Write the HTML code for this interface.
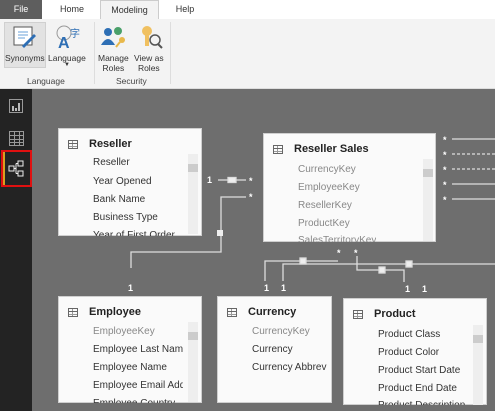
<!DOCTYPE html>
<html><head><meta charset="utf-8"><style>
*{margin:0;padding:0;box-sizing:border-box}
body{width:495px;height:411px;overflow:hidden;font-family:"Liberation Sans",sans-serif;background:#6e6e6e;position:relative}
.abs{position:absolute}
.tabs{left:0;top:0;width:495px;height:19px;background:#fff}
.tab{position:absolute;top:0;height:19px;font-size:9px;line-height:19px;text-align:center;color:#333}
.ribbon{left:0;top:19px;width:495px;height:70px;background:#f3f3f3;border-bottom:1px solid #ddd}
.side{left:0;top:89px;width:32px;height:322px;background:#232323}
.card{position:absolute;background:#fafafa;border:1px solid #cfcfcf}
.card h3{position:absolute;left:30px;top:9px;font-size:11px;font-weight:bold;color:#222}
.ti{position:absolute;left:9px;top:11px;width:10px;height:9px;border:1px solid #666;background:linear-gradient(#666 0 0) 0 2px/100% 1px no-repeat,linear-gradient(#999 0 0) 0 5px/100% 1px no-repeat,linear-gradient(#999 0 0) 3px 0/1px 100% no-repeat}
.f{position:absolute;font-size:10px;color:#333;white-space:nowrap;overflow:hidden}
.g{color:#888}
.sb{position:absolute;width:10px;background:#eee}
.sb i{position:absolute;left:0;top:10px;width:10px;height:8px;background:#ccc}
</style></head><body>
<div class="abs tabs">
 <div class="tab" style="left:0;width:42px;background:#5e5e5e;color:#fff">File</div>
 <div class="tab" style="left:44px;width:56px">Home</div>
 <div class="tab" style="left:100px;width:59px;background:#f3f3f3;border:1px solid #ccc;border-bottom:none;height:20px">Modeling</div>
 <div class="tab" style="left:160px;width:50px">Help</div>
</div>
<div class="abs ribbon">
 <div class="abs" style="left:4px;top:3px;width:42px;height:46px;background:#e2e2e2;border:1px solid #d0d0d0"></div>
 <svg class="abs" style="left:12px;top:6px" width="26" height="24"><rect x="2" y="2" width="18" height="18" fill="#fff" stroke="#555"/><path d="M6 7h10M6 10h10M6 13h7" stroke="#6aa0d8"/><path d="M10 21l12-12 2 2-12 12z" fill="#2e6fb5"/></svg>
 <svg class="abs" style="left:54px;top:5px" width="30" height="26"><circle cx="10" cy="9" r="7" fill="none" stroke="#999"/><text x="4" y="24" font-size="16" font-weight="bold" fill="#2e6fb5" font-family="Liberation Sans">A</text><text x="16" y="13" font-size="10" fill="#2e6fb5" font-family="Noto Sans CJK SC">字</text></svg>
 <div class="abs" style="left:5px;top:34px;font-size:8.5px;color:#333">Synonyms</div>
 <div class="abs" style="left:48px;top:34px;font-size:8.5px;color:#333">Language</div>
 <div class="abs" style="left:64px;top:43px;font-size:6px;color:#333">▼</div>
 <div class="abs" style="left:27px;top:57px;font-size:8.5px;color:#444">Language</div>
 <div class="abs" style="left:94px;top:3px;width:1px;height:62px;background:#ddd"></div>
 <svg class="abs" style="left:100px;top:6px" width="28" height="24"><circle cx="8" cy="7" r="4" fill="#2e6fb5"/><circle cx="18" cy="6" r="4" fill="#4aa06a"/><path d="M1 20q7-12 14 0z" fill="#2e6fb5"/><circle cx="22" cy="15" r="3" fill="#e8b84a"/><path d="M20 17l-4 5" stroke="#e8b84a" stroke-width="2"/></svg>
 <svg class="abs" style="left:140px;top:6px" width="24" height="24"><circle cx="7" cy="6" r="5" fill="#f0c060"/><rect x="5" y="9" width="4" height="12" fill="#f0c060"/><circle cx="15" cy="15" r="5" fill="none" stroke="#555" stroke-width="1.5"/><path d="M18 19l4 4" stroke="#555" stroke-width="2"/></svg>
 <div class="abs" style="left:98px;top:34px;font-size:8.5px;color:#333;text-align:center;line-height:10px">Manage<br>Roles</div>
 <div class="abs" style="left:134px;top:34px;font-size:8.5px;color:#333;text-align:center;line-height:10px">View as<br>Roles</div>
 <div class="abs" style="left:116px;top:57px;font-size:8.5px;color:#444">Security</div>
 <div class="abs" style="left:170px;top:3px;width:1px;height:62px;background:#ddd"></div>
</div>
<div class="abs side">
 <svg class="abs" style="left:9px;top:10px" width="14" height="14"><rect x=".5" y=".5" width="13" height="13" fill="none" stroke="#999"/><path d="M4 12V7M7 12V9M10 12V4" stroke="#bbb" stroke-width="2"/></svg>
 <svg class="abs" style="left:9px;top:42px" width="15" height="15"><rect x=".5" y=".5" width="14" height="14" fill="none" stroke="#999"/><path d="M0 4.5h15M0 8.5h15M0 11.5h15M5.5 0v15M10.5 0v15" stroke="#999"/></svg>
 <div class="abs" style="left:1px;top:61px;width:31px;height:37px;border:2px solid #e01010"></div>
 <div class="abs" style="left:3px;top:63px;width:2px;height:33px;background:#d8a020"></div>
 <svg class="abs" style="left:8px;top:71px" width="17" height="17"><rect x="1" y="6" width="5" height="5" fill="none" stroke="#eee"/><rect x="10" y="1" width="5" height="5" fill="none" stroke="#eee"/><rect x="10" y="11" width="5" height="5" fill="none" stroke="#eee"/><path d="M6 8.5h2M8 3.5v10M8 3.5h2M8 13.5h2" stroke="#eee"/></svg>
</div>
<svg class="abs" style="left:0;top:0" width="495" height="411">
 <g stroke="#ddd" stroke-width="1.3" fill="none">
 <path d="M218 180h28"/><rect x="228" y="177.5" width="8" height="5" fill="#eee"/>
 <path d="M246 197h-25v55h-90v16"/><rect x="217" y="230" width="6" height="6" fill="#eee" stroke="none"/>
 <path d="M452 139h43M452 184h43M452 199h43"/>
 <path d="M452 154h43M452 169h43" stroke-dasharray="3 2"/>
 <path d="M338 261h-73v20M495 264h-212v17M357 256v14h47v12"/>
 <rect x="300" y="258" width="6" height="6" fill="#eee"/><rect x="379" y="267" width="6" height="6" fill="#eee"/><rect x="406" y="261" width="6" height="6" fill="#eee"/>
 </g>
 <g fill="#fff" font-size="9" font-weight="bold" font-family="Liberation Sans">
 <text x="207" y="183">1</text><text x="249" y="184">*</text><text x="249" y="200">*</text>
 <text x="443" y="143">*</text><text x="443" y="158">*</text><text x="443" y="173">*</text><text x="443" y="188">*</text><text x="443" y="203">*</text>
 <text x="337" y="256">*</text><text x="354" y="256">*</text>
 <text x="128" y="291">1</text><text x="264" y="291">1</text><text x="281" y="291">1</text><text x="405" y="292">1</text><text x="422" y="292">1</text>
 </g>
</svg>
<div class="card" style="left:58px;top:128px;width:144px;height:108px">
 <div class="ti"></div><h3>Reseller</h3>
 <div class="f" style="left:34px;top:28px">Reseller</div>
 <div class="f" style="left:34px;top:47px">Year Opened</div>
 <div class="f" style="left:34px;top:65px">Bank Name</div>
 <div class="f" style="left:34px;top:83px">Business Type</div>
 <div class="f" style="left:34px;top:101px;height:6px">Year of First Order</div>
 <div class="sb" style="left:129px;top:25px;height:80px"><i></i></div>
</div>
<div class="card" style="left:263px;top:133px;width:173px;height:109px">
 <div class="ti"></div><h3>Reseller Sales</h3>
 <div class="f g" style="left:34px;top:30px">CurrencyKey</div>
 <div class="f g" style="left:34px;top:48px">EmployeeKey</div>
 <div class="f g" style="left:34px;top:66px">ResellerKey</div>
 <div class="f g" style="left:34px;top:84px">ProductKey</div>
 <div class="f g" style="left:34px;top:101px;height:7px">SalesTerritoryKey</div>
 <div class="sb" style="left:159px;top:25px;height:82px"><i></i></div>
</div>
<div class="card" style="left:58px;top:296px;width:144px;height:107px">
 <div class="ti"></div><h3>Employee</h3>
 <div class="f g" style="left:34px;top:29px">EmployeeKey</div>
 <div class="f" style="left:34px;top:47px;width:90px">Employee Last Name</div>
 <div class="f" style="left:34px;top:65px">Employee Name</div>
 <div class="f" style="left:34px;top:83px;width:90px">Employee Email Address</div>
 <div class="f" style="left:34px;top:101px;height:5px">Employee Country</div>
 <div class="sb" style="left:129px;top:25px;height:80px"><i></i></div>
</div>
<div class="card" style="left:217px;top:296px;width:115px;height:107px">
 <div class="ti"></div><h3>Currency</h3>
 <div class="f g" style="left:34px;top:29px">CurrencyKey</div>
 <div class="f" style="left:34px;top:47px">Currency</div>
 <div class="f" style="left:34px;top:65px;width:75px">Currency Abbreviation</div>
</div>
<div class="card" style="left:343px;top:298px;width:144px;height:107px">
 <div class="ti"></div><h3>Product</h3>
 <div class="f" style="left:34px;top:30px">Product Class</div>
 <div class="f" style="left:34px;top:48px">Product Color</div>
 <div class="f" style="left:34px;top:66px">Product Start Date</div>
 <div class="f" style="left:34px;top:84px">Product End Date</div>
 <div class="f" style="left:34px;top:101px;height:5px">Product Description</div>
 <div class="sb" style="left:129px;top:26px;height:80px"><i></i></div>
</div>
</body></html>
